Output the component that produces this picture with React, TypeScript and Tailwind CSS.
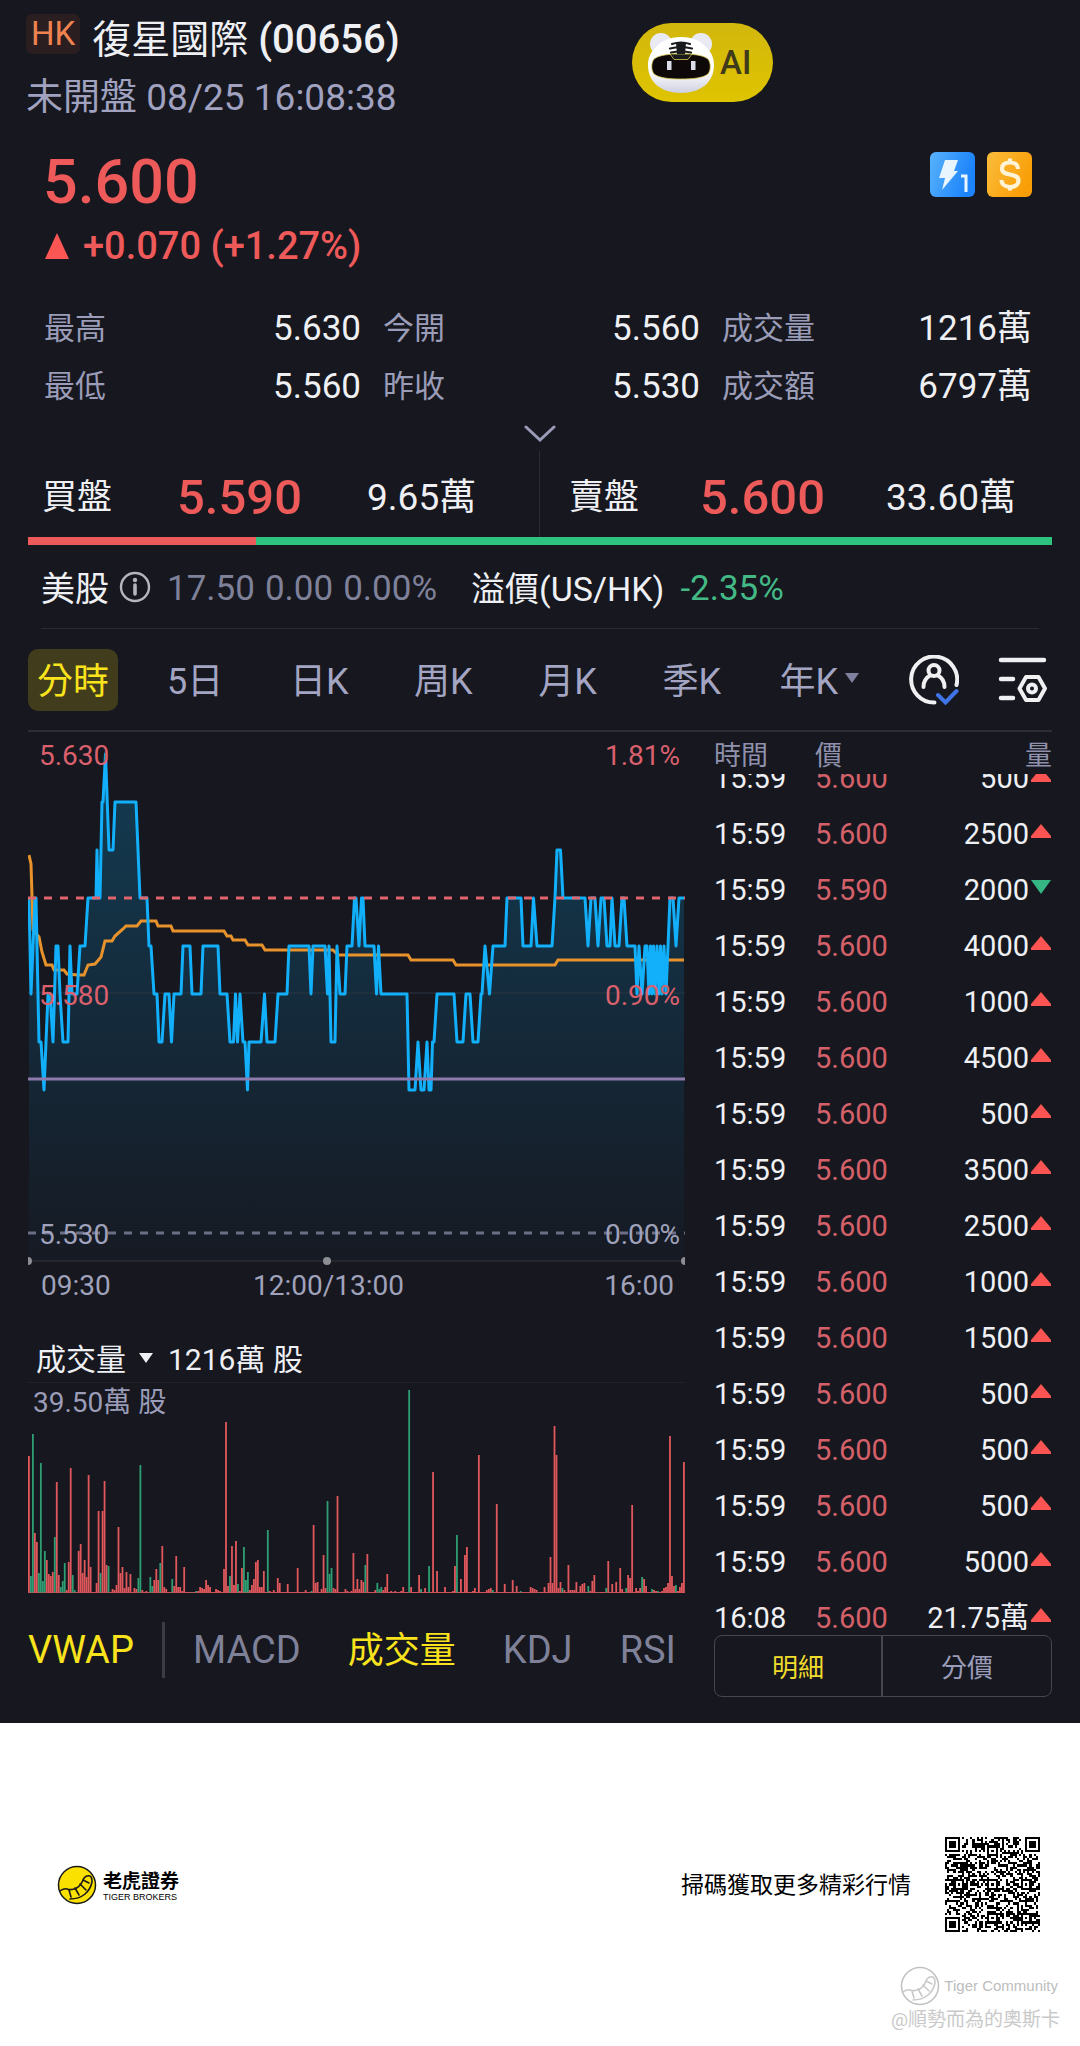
import type { ReactNode } from 'react';

const stats = [
  ['最高', '5.630'],
  ['今開', '5.560'],
  ['成交量', '1216萬'],
  ['最低', '5.560'],
  ['昨收', '5.530'],
  ['成交額', '6797萬'],
];

const periods = ['5日', '日K', '周K', '月K', '季K'];

interface Trade {
  time: string;
  price: string;
  volume: string;
  down?: boolean;
}

const trades: Trade[] = [
  { time: '15:59', price: '5.600', volume: '500' },
  { time: '15:59', price: '5.600', volume: '2500' },
  { time: '15:59', price: '5.590', volume: '2000', down: true },
  { time: '15:59', price: '5.600', volume: '4000' },
  { time: '15:59', price: '5.600', volume: '1000' },
  { time: '15:59', price: '5.600', volume: '4500' },
  { time: '15:59', price: '5.600', volume: '500' },
  { time: '15:59', price: '5.600', volume: '3500' },
  { time: '15:59', price: '5.600', volume: '2500' },
  { time: '15:59', price: '5.600', volume: '1000' },
  { time: '15:59', price: '5.600', volume: '1500' },
  { time: '15:59', price: '5.600', volume: '500' },
  { time: '15:59', price: '5.600', volume: '500' },
  { time: '15:59', price: '5.600', volume: '500' },
  { time: '15:59', price: '5.600', volume: '5000' },
  { time: '16:08', price: '5.600', volume: '21.75萬' },
];

// [x, ticks below the 5.630 high], one tick is 0.010
const pricePoints: [number, number][] = [
  [1, 3], [3, 5], [5, 4], [7, 3], [8, 3], [11, 6], [13, 6], [16, 7], [18, 6], [20, 5], [22, 5],
  [25, 6], [28, 4], [30, 4], [32, 5], [35, 6], [40, 6], [42, 4], [44, 5], [49, 5], [52, 4], [57, 4],
  [60, 3], [68, 3], [69, 2], [70, 3], [72, 3], [74, 1], [75, 1], [77.5, 0], [81, 2], [85, 2],
  [87, 1], [108, 1], [112, 3], [119, 3], [121, 4], [123, 4], [126, 5], [129, 5], [131, 6], [134, 6],
  [137, 5], [141, 5], [143.5, 6], [146, 5], [153, 5], [155, 4], [162, 4], [164, 5], [173, 5],
  [175, 4], [190, 4], [192, 5], [199, 5], [202, 6], [205.5, 6], [207.5, 5], [209.5, 6], [212, 5],
  [215, 6], [217, 6], [219.5, 7], [221, 6], [233, 6], [236.5, 5], [239, 6], [247, 6], [250, 5],
  [259, 5], [261, 4], [281, 4], [283, 5], [285, 4], [297, 4], [299.5, 5], [301, 4], [303, 6],
  [307, 6], [309, 4], [312, 5], [317, 5], [319, 4], [324, 4], [326.5, 3], [328, 3], [331, 4],
  [333.5, 3], [335, 3], [337, 4], [346, 4], [348.5, 5], [350.5, 4], [353, 5], [379, 5], [381, 7],
  [387, 7], [390, 6], [393, 7], [396, 7], [399, 6], [401, 7], [403, 7], [404.5, 6], [406, 6],
  [409, 5], [426, 5], [429, 6], [435, 6], [438, 5], [442, 5], [445, 6], [450, 6], [453, 5],
  [454, 5], [457, 4], [461.5, 5], [465, 4], [477, 4], [479, 3], [493, 3], [495, 4], [503, 4],
  [505.5, 3], [509, 4], [524, 4], [527, 3], [529, 2], [532.5, 2], [535, 3], [557, 3], [560, 4],
  [563, 3], [567, 3], [570, 4], [573, 3], [576, 3], [579, 4], [582, 4], [584, 3], [587, 4],
  [591, 4], [594, 3], [596, 3], [599, 4], [607, 4], [609, 5], [611, 4], [614, 5], [617, 4],
  [619, 4], [621, 5], [622.5, 4], [624, 5], [625.5, 4], [627, 5], [629, 4], [631, 5], [632.5, 4],
  [634, 5], [636, 4], [638, 5], [640, 4], [642, 3], [645, 3], [648, 4], [651, 3], [656, 3],
];

const averageLine =
  '1,123 3,132 5,198 11,205 14,220 18,233 24,233 26,238 36,238 39,242 50,243 56,243 60,233 67,232 73,225 77,209 84,209 87,204 95,197 98,194 109,194 113,189 128,189 130,194 143,194 145,199 196,199 199,204 203,204 205,208 217,208 220,213 234,213 237,218 305,218 310,223 380,223 383,228 425,228 428,233 527,233 530,228 656,228';

// Volume bar per minute, negative values are falling minutes
const volumes = [
  137, -17, -159, 60, 51, -20, -130, -12, -42, 33, 19, 17, 21, -56, 111, 18, -6, -12, -30, 3, 31, 125,
  -18, -3, 0, 42, 49, 20, 33, 16, 118, 26, 0, 1, 10, 82, -20, 82, 112, 28, -27, 0, 4, 3, 8, 66, 20, 26,
  5, 21, 6, 19, 0, 5, 4, -15, -128, 3, 1, 2, 0, -16, -7, 13, 24, 13, -30, 47, 6, 4, 0, 0, -14, 7, 37,
  6, 6, 2, 26, 1, 1, 0, -1, 0, -2, 2, 6, 5, 4, 13, 8, 6, 0, 1, 4, 3, 2, 0, 24, 171, 7, -17, 47, 8, 52,
  -9, 2, 25, -46, -13, -21, 3, 8, 14, 31, 33, 6, 6, 22, 0, -63, 2, 1, 3, 0, 15, 10, 1, 0, 1, 9, 1, 0,
  0, 1, 25, 1, 0, 0, 3, 0, 1, -2, 68, 10, 11, 0, 4, 38, 5, -92, -19, -25, 5, 4, 97, 1, 0, 0, 4, 2, 0,
  2, 40, 4, 14, 4, 13, 11, -28, 39, 0, 0, 1, 3, -10, -4, -6, 3, 6, 19, 1, 2, 0, 2, 0, 1, 2, 6, 0, 0,
  -203, 6, 0, 0, 1, 18, -4, 0, 5, 0, -27, 1, 121, 1, 22, 1, 1, 0, 6, 1, 0, 0, 2, 27, -58, 1, 14, 1,
  38, 46, 0, 1, 2, 5, 0, 138, 0, 0, 1, 3, 4, 5, -3, 1, 89, 0, 1, 0, 9, 1, 0, 1, 13, 1, 7, 0, -2, 1, 0,
  1, 0, 6, 5, 4, 3, -1, 0, 0, 6, 0, 10, 36, 10, 167, 138, 5, 11, -5, 3, 1, 28, 3, 3, 3, 11, 1, 7, 9,
  10, 0, -7, 2, 12, 18, 0, -1, 1, 0, 0, -5, 32, 0, 9, 1, 11, 1, 25, 4, 1, -5, 18, 15, 88, 1, 5, 2, 5,
  -16, 14, 7, 0, 1, -4, 3, 2, -2, 1, 2, 5, 6, 10, 157, 17, 7, -8, 2, 6, 10, 131,
];

function PriceChart() {
  const line = pricePoints.map(([x, t]) => `${x},${22 + t * 48}`).join(' ');

  return (
    <div className="relative">
      <svg className="block h-[534px] w-full" viewBox="0 0 657 534" preserveAspectRatio="none">
        <defs>
          <linearGradient id="area" x1="0" y1="0" x2="0" y2="1">
            <stop offset="0" stopColor="#0aa5e8" stopOpacity="0.26" />
            <stop offset="1" stopColor="#0aa5e8" stopOpacity="0.02" />
          </linearGradient>
        </defs>
        <polygon points={`1,529 ${line} 656,529`} fill="url(#area)" />
        <path d="M0 261H657" stroke="#2a3540" strokeWidth="1" />
        <path d="M0 529H657" stroke="#26272e" strokeWidth="2" />
        <polyline points={averageLine} fill="none" stroke="#e8922c" strokeWidth="3" />
        <polyline
          points={line}
          fill="none"
          stroke="#12b0fb"
          strokeWidth="3"
          strokeLinejoin="round"
        />
        <path d="M0 347H657" stroke="#8f7bab" strokeWidth="3" />
        <path d="M0 166H657" stroke="#e0666b" strokeWidth="3" strokeDasharray="8 8" />
        <path d="M0 501H657" stroke="#6b6e85" strokeWidth="3" strokeDasharray="8 8" />
        <circle cx="0" cy="529" r="4" fill="#8d8e94" />
        <circle cx="299" cy="529" r="4" fill="#8d8e94" />
        <circle cx="657" cy="529" r="4" fill="#8d8e94" />
      </svg>
      <div className="absolute inset-x-0 top-2 flex justify-between pl-[11px] pr-[5px] text-[28px] leading-8 text-[#d9606c]">
        <span>5.630</span>
        <span>1.81%</span>
      </div>
      <div className="absolute inset-x-0 top-[248px] flex justify-between pl-[11px] pr-[5px] text-[28px] leading-8 text-[#d9606c]">
        <span>5.580</span>
        <span>0.90%</span>
      </div>
      <div className="absolute inset-x-0 top-[487px] flex justify-between pl-[11px] pr-[5px] text-[28px] leading-8 text-[#a0a2bb]">
        <span>5.530</span>
        <span>0.00%</span>
      </div>
    </div>
  );
}

function VolumeChart() {
  const step = 657 / volumes.length;

  return (
    <svg className="block h-[210px] w-full" viewBox="0 0 657 210" preserveAspectRatio="none">
      {volumes.map((v, i) => {
        const height = Math.max(Math.abs(v), 1);
        return (
          <rect
            key={i}
            x={i * step}
            y={210 - height}
            width="1.8"
            height={height}
            fill={v < 0 ? '#2f9f73' : '#e0585c'}
          />
        );
      })}
      <path d="M0 209.5H657" stroke="#d9545a" strokeWidth="1" strokeOpacity="0.5" />
    </svg>
  );
}

function TigerHead() {
  return (
    <svg className="h-[62px] w-[66px]" viewBox="0 0 66 62">
      <defs>
        <linearGradient id="fur" x1="0" y1="0" x2="0" y2="1">
          <stop offset="0.6" stopColor="#ffffff" />
          <stop offset="1" stopColor="#cfd0e0" />
        </linearGradient>
      </defs>
      <circle cx="13" cy="12" r="11" fill="#e9eaf4" />
      <circle cx="53" cy="12" r="11" fill="#e9eaf4" />
      <path
        d="M33 5c12 0 20 4 26 11 5 5 7 11 7 17 0 17-13 28-33 28S0 50 0 33c0-6 2-12 7-17C13 9 21 5 33 5z"
        fill="url(#fur)"
      />
      <path
        d="M33 22c12 0 22 1 27 5 3 4 3 11 0 15-5 4-15 5-27 5s-22-1-27-5c-3-4-3-11 0-15 5-4 15-5 27-5z"
        fill="#0e0809"
        stroke="#d8c94a"
        strokeWidth="0.8"
      />
      <path d="M22 22h22l-4 5.500H26z" fill="#1a1b1d" stroke="#d8c94a" strokeWidth="0.8" />
      <path d="M28 11h10l-1 11h-8z" fill="#1a1b1d" />
      <path
        d="M24 12q9-3 18 0M22 16.500q11-2.500 22 0M23 20.500q10-2 20 0"
        fill="none"
        stroke="#1a1b1d"
        strokeWidth="2.200"
        strokeLinecap="round"
      />
      <rect x="19" y="29" width="4.500" height="9" fill="#dcdde6" />
      <rect x="43" y="29" width="4.500" height="9" fill="#dcdde6" />
    </svg>
  );
}

function TigerTail({ className, ring, fill, mark }: { className: string; ring: string; fill: string; mark: string }) {
  return (
    <svg className={className} viewBox="0 0 40 40">
      <circle cx="20" cy="20" r="18.500" fill={fill} stroke={ring} strokeWidth="1.500" />
      <g fill="none" stroke={mark} strokeWidth="1.600" strokeLinecap="round">
        <path d="M3 26c3-2 4-3 7-2 6 2 13-1 16-9 1-3 4-5 7-4 2 1 2 3 2 6-2 10-10 17-22 17" />
        <path d="M12 25l2 7M18 23l4 7M23 19l6 6M26 15l6 3" />
      </g>
    </svg>
  );
}

function inSquare(x: number, y: number, cx: number, cy: number, r: number) {
  return Math.max(Math.abs(x - cx), Math.abs(y - cy)) <= r;
}

function qrModule(x: number, y: number): boolean {
  for (const [cx, cy] of [[3, 3], [41, 3], [3, 41]]) {
    if (inSquare(x, y, cx, cy, 4)) {
      const d = Math.max(Math.abs(x - cx), Math.abs(y - cy));
      return d !== 2 && d !== 4;
    }
  }
  for (const [cx, cy] of [[22, 6], [6, 22], [22, 22], [38, 22], [22, 38], [38, 38]]) {
    if (inSquare(x, y, cx, cy, 2)) {
      return Math.max(Math.abs(x - cx), Math.abs(y - cy)) !== 1;
    }
  }
  if (y === 6) return x % 2 === 0;
  if (x === 6) return y % 2 === 0;
  const n = Math.sin(x * 12.9898 + y * 78.233) * 43758.5453;
  return n - Math.floor(n) < 0.52;
}

function QrCode() {
  let d = '';
  for (let y = 0; y < 45; y++) {
    for (let x = 0; x < 45; x++) {
      if (qrModule(x, y)) d += `M${x} ${y}h1v1h-1z`;
    }
  }
  return (
    <svg className="size-[95px]" viewBox="0 0 45 45" shapeRendering="crispEdges" role="img">
      <path d={d} fill="#000" />
    </svg>
  );
}

function Quote({ label, price, size, className }: { label: string; price: string; size: string; className: string }) {
  return (
    <div className={`flex items-center whitespace-nowrap pt-2 text-[37px] ${className}`}>
      <span className="text-[35px]">{label}</span>
      <span className="text-[49px] font-medium text-[#ec5a59]">{price}</span>
      <span>{size}</span>
    </div>
  );
}

function Indicator({ active, children }: { active?: boolean; children: ReactNode }) {
  return <button className={active ? 'text-[#f9e31c]' : 'text-[#7f8199]'}>{children}</button>;
}

export default function App() {
  return (
    <div className="bg-white font-['Roboto','Noto_Sans_CJK_TC',sans-serif]">
      <main className="bg-[#16171f] pb-[26px] text-[#eff0f4]">
        {/* Title */}
        <header className="grid grid-cols-[606fr_422fr] px-[26px] pt-[14px]">
          <div>
            <h1 className="flex items-start gap-3 text-[40px] leading-[52px]">
              <span className="rounded-md bg-[#2a1e20] px-[5px] text-[33px] leading-10 text-[#ee8350]">HK</span>
              <span className="whitespace-nowrap">
                <span className="text-[39px]">復星國際</span> <span className="font-medium">(00656)</span>
              </span>
            </h1>
            <p className="mt-2 text-[37px] leading-[48px] text-[#a0a2c0]">未開盤 08/25 16:08:38</p>
          </div>
          <div className="pt-[9px]">
            <button className="flex h-[79px] w-[141px] items-center rounded-full bg-linear-to-b from-[#d2b70d] to-[#dfc400] pl-4 text-[33px] font-medium text-[#3f3b1a]">
              <TigerHead />
              <span className="ml-[6px]">AI</span>
            </button>
          </div>
        </header>

        {/* Last price */}
        <section className="flex items-start justify-between pl-[43px] pr-12 pt-6">
          <div className="font-medium text-[#ee5a59]">
            <div className="text-[61px] leading-[72px]">5.600</div>
            <div className="mt-1 flex items-center gap-[14px] text-[38px] leading-[48px]">
              <svg className="h-[26px] w-[26px]" viewBox="0 0 26 26">
                <path d="M14 0l12 26H2z" fill="#fb5654" />
              </svg>
              +0.070 (+1.27%)
            </div>
          </div>
          <div className="flex gap-3 pt-[6px]">
            <svg className="size-[45px]" viewBox="0 0 45 45">
              <defs>
                <linearGradient id="blue" x1="0" y1="0" x2="1" y2="0.300">
                  <stop offset="0" stopColor="#58b2fb" />
                  <stop offset="1" stopColor="#1b83fb" />
                </linearGradient>
              </defs>
              <rect width="45" height="45" rx="6" fill="url(#blue)" />
              <path d="M15 8h13l-4 11h4L12 38l3-12H9z" fill="#e8f5ff" />
              <path d="M31 24h5v16" fill="none" stroke="#e8f5ff" strokeWidth="3" />
            </svg>
            <svg className="size-[45px]" viewBox="0 0 45 45">
              <defs>
                <linearGradient id="gold" x1="0" y1="0" x2="1" y2="0.500">
                  <stop offset="0" stopColor="#fbbd3c" />
                  <stop offset="1" stopColor="#f99e06" />
                </linearGradient>
              </defs>
              <rect width="45" height="45" rx="6" fill="url(#gold)" />
              <path
                d="M31 17c0-4-3-6.500-8-6.500s-8 2-8 6 3 5 8 6 8.500 2 8.500 6-3.500 6.500-8.500 6.500-8.500-3-8.500-7M23 6.500v4M23 35v3.500"
                fill="none"
                stroke="#fff3d6"
                strokeWidth="4.200"
              />
            </svg>
          </div>
        </section>

        {/* Day statistics */}
        <dl className="mt-[30px] grid grid-cols-[317fr_317fr_310fr] gap-x-[22px] pl-11 pr-12">
          {stats.map(([label, value]) => (
            <div key={label} className="flex items-center justify-between leading-[58px]">
              <dt className="text-[31px] text-[#9a9cb8]">{label}</dt>
              <dd className="text-[35px]">{value}</dd>
            </div>
          ))}
        </dl>
        <button className="mx-auto flex h-[35px] w-16 items-center justify-center" aria-label="展開">
          <svg className="h-[18px] w-8" viewBox="0 0 32 18">
            <path d="M2 2l14 13L30 2" fill="none" stroke="#9a9cb8" strokeWidth="3" strokeLinecap="round" />
          </svg>
        </button>

        {/* Best bid and ask */}
        <section className="px-7">
          <div className="grid h-[86px] grid-cols-2">
            <Quote
              label="買盤"
              price="5.590"
              size="9.65萬"
              className="gap-[65px] border-r border-[#2a2b33] pl-[14px]"
            />
            <Quote label="賣盤" price="5.600" size="33.60萬" className="gap-[61px] pl-[29px]" />
          </div>
          <div className="flex h-2 bg-[#2cc47e]">
            <div className="bg-[#ec5a59]" style={{ width: `${(9.65 / 43.25) * 100}%` }} />
          </div>
        </section>

        {/* US listing */}
        <section className="mx-[41px] flex h-[84px] items-center whitespace-nowrap border-b border-[#2a2b33] pt-[5px] text-[35px]">
          <span className="text-[34px]">美股</span>
          <svg className="mb-1 ml-[10px] size-8" viewBox="0 0 32 32">
            <circle cx="16" cy="16" r="14" fill="none" stroke="#b4b5bf" strokeWidth="2.400" />
            <path d="M16 14v9" stroke="#b4b5bf" strokeWidth="3.600" strokeLinecap="round" />
            <circle cx="16" cy="9" r="2.200" fill="#b4b5bf" />
          </svg>
          <span className="ml-4 flex gap-[10px] text-[#7f8199]">
            <span>17.50</span>
            <span>0.00</span>
            <span>0.00%</span>
          </span>
          <span className="ml-[34px] text-[34px]">溢價(US/HK)</span>
          <span className="ml-4 text-[#43b985]">-2.35%</span>
        </section>

        {/* Chart periods */}
        <nav className="mx-7 flex h-[103px] items-center border-b-2 border-[#2c2c31] text-[36px] text-[#a3a5c3]">
          <button className="h-[62px] w-[90px] rounded-[10px] bg-[#413c1b] pt-[5px] text-[#f9e31c]">分時</button>
          <div className="ml-[15px] grid flex-1 grid-cols-[repeat(5,31fr)_33fr] pt-[5px]">
            {periods.map((p) => (
              <button key={p}>{p}</button>
            ))}
            <button className="flex items-center justify-center gap-[6px]">
              年K
              <svg className="mb-2 h-3 w-4" viewBox="0 0 16 12">
                <path d="M1 1h14l-7 10z" fill="#7f819f" />
              </svg>
            </button>
          </div>
          <button className="ml-[23px]" aria-label="帳戶">
            <svg className="size-[50px]" viewBox="0 0 50 50" fill="none" strokeLinecap="round">
              <path d="M47.500 30A23 23 0 1 0 25.500 47.500" stroke="#f0f0f2" strokeWidth="4" />
              <circle cx="25" cy="15.500" r="5.500" stroke="#f0f0f2" strokeWidth="4" />
              <path d="M14.500 32c0-6 2-9 6.500-11.500M35.500 32c0-6-2-9-6.500-11.500" stroke="#f0f0f2" strokeWidth="4" />
              <path d="M29 40l7.500 7.500L47.500 36" stroke="#3f74e6" strokeWidth="4" />
            </svg>
          </button>
          <button className="ml-[39px] mr-[5px]" aria-label="圖表設定">
            <svg className="h-[46px] w-[49px]" viewBox="0 0 49 46" fill="none" stroke="#f0f0f2" strokeLinecap="round">
              <path d="M3 3h43M3 22h12M3 41h12" strokeWidth="4.500" />
              <path d="M21.500 31.500L28 20h12.500L47 31.500 40.500 43H28z" strokeWidth="4" strokeLinejoin="round" />
              <circle cx="34" cy="31.500" r="4" strokeWidth="4" />
            </svg>
          </button>
        </nav>

        <section className="grid grid-cols-[657fr_338fr] gap-x-[29px] px-7">
          <div>
            <PriceChart />
            <div className="grid grid-cols-[1fr_auto_1fr] pl-[13px] pr-[11px] pt-[2px] text-[28px] leading-9 text-[#a0a2bb]">
              <span>09:30</span>
              <span className="mr-[58px]">12:00/13:00</span>
              <span className="text-right">16:00</span>
            </div>

            <div className="mt-[34px] flex items-center border-b border-[#22232a] pl-2 text-[30px] leading-[44px]">
              <button className="flex items-center gap-3">
                成交量
                <svg className="mb-1 h-3 w-4" viewBox="0 0 16 12">
                  <path d="M1 1h14l-7 10z" fill="#eff0f4" />
                </svg>
              </button>
              <span className="ml-[14px]">1216萬 股</span>
            </div>
            <div className="relative">
              <VolumeChart />
              <span className="absolute left-[5px] top-[2px] text-[28px] leading-9 text-[#9a9cb8]">
                39.50萬 股
              </span>
            </div>

            <div className="mt-7 flex items-center whitespace-nowrap text-[38px] leading-[56px]">
              <Indicator active>VWAP</Indicator>
              <span className="mx-7 h-14 w-[3px] bg-[#3c3d44]" />
              <div className="flex flex-1 justify-between pr-[9px]">
                <Indicator>MACD</Indicator>
                <Indicator active>
                  <span className="block pt-[2px] text-[36px]">成交量</span>
                </Indicator>
                <Indicator>KDJ</Indicator>
                <Indicator>RSI</Indicator>
              </div>
            </div>
          </div>

          {/* Trades */}
          <div>
            <table className="w-full table-fixed">
              <thead>
                <tr className="text-[27px] leading-[36px] text-[#8f91ac]">
                  <th className="w-[101px] p-0 pt-[6px] text-left font-normal">時間</th>
                  <th className="w-20 p-0 pt-[6px] text-left font-normal">價</th>
                  <th className="p-0 pt-[6px] text-right font-normal">量</th>
                </tr>
              </thead>
              <tbody>
                {trades.map((t, i) => (
                  <tr key={i} className="group text-[29px] leading-[56px]">
                    <td className="p-0">
                      <div className="flex h-14 items-end overflow-hidden group-first:h-8">{t.time}</div>
                    </td>
                    <td className="p-0 text-[#d4606a]">
                      <div className="flex h-14 items-end overflow-hidden group-first:h-8">{t.price}</div>
                    </td>
                    <td className="p-0">
                      <div className="flex h-14 items-end justify-end overflow-hidden group-first:h-8">
                        <span>{t.volume}</span>
                        <span className="flex h-14 items-center pb-[6px]">
                          <svg className="h-[14px] w-[23px]" viewBox="0 0 23 14">
                            {t.down ? (
                              <path d="M2 0h20L12 14z" fill="#34b783" />
                            ) : (
                              <path d="M12 0l10 12v2H2v-2z" fill="#fb5553" />
                            )}
                          </svg>
                        </span>
                      </div>
                    </td>
                  </tr>
                ))}
              </tbody>
            </table>
            <div className="relative -mt-[11px] grid h-[62px] grid-cols-2 divide-x-2 divide-[#45464e] rounded-lg border border-[#45464e] pt-0 text-[26px]">
              <button className="pt-1 text-[#f0dc2b]">明細</button>
              <button className="pt-1 text-[#9a9cb8]">分價</button>
            </div>
          </div>
        </section>
      </main>

      <footer className="pt-[114px] text-black">
        <div className="flex items-center pl-[57px] pr-10">
          <TigerTail className="size-10" ring="#1a1a1a" fill="#fbe100" mark="#1a1a1a" />
          <div className="ml-[6px] pt-1">
            <div className="text-[19px] font-bold leading-5">老虎證券</div>
            <div className="font-['Liberation_Sans',sans-serif] text-[9px] leading-[10px]">TIGER BROKERS</div>
          </div>
          <p className="ml-auto mr-[34px] pt-1 text-[23px]">掃碼獲取更多精彩行情</p>
          <QrCode />
        </div>
        <div className="mt-[34px] flex flex-col items-end pb-[10px] pr-5 text-[#c9c9c9]">
          <div className="flex items-center gap-1 pr-[2px]">
            <TigerTail className="size-10" ring="#c0c0c0" fill="#fff" mark="#c9c9c9" />
            <span className="font-['Liberation_Sans',sans-serif] text-[15px] text-[#bdbdbd]">Tiger Community</span>
          </div>
          <div className="text-[19px] leading-7">@順勢而為的奧斯卡</div>
        </div>
      </footer>
    </div>
  );
}
